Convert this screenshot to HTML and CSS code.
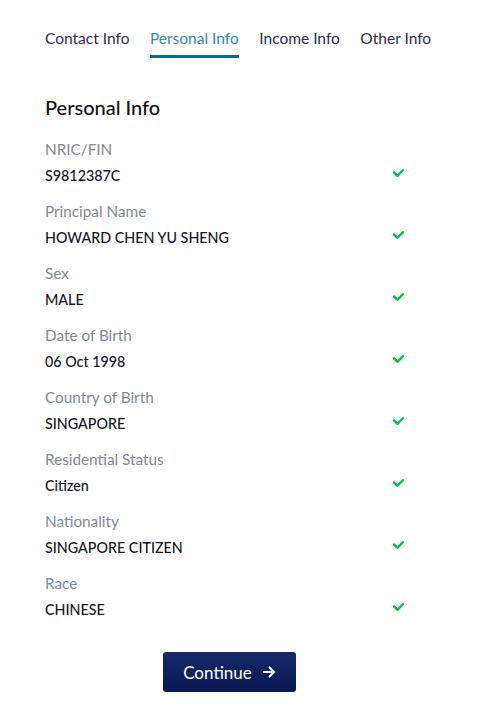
FILE: index.html
```html
<!DOCTYPE html>
<html>
<head>
<meta charset="utf-8">
<link rel="stylesheet" href="styles.css">
</head>
<body>
<div class="page">
  <nav class="tabs">
    <span class="tab">Contact Info</span>
    <span class="tab active">Personal Info</span>
    <span class="tab">Income Info</span>
    <span class="tab">Other Info</span>
  </nav>
  <h2 class="title">Personal Info</h2>
  <div class="fields">
    <div class="field"><div class="text"><div class="label">NRIC/FIN</div><div class="value">S9812387C</div></div><svg class="check" viewBox="0 0 10 7"><path d="M1 3.2 L4 6 L9 1"/></svg></div>
    <div class="field"><div class="text"><div class="label">Principal Name</div><div class="value">HOWARD CHEN YU SHENG</div></div><svg class="check" viewBox="0 0 10 7"><path d="M1 3.2 L4 6 L9 1"/></svg></div>
    <div class="field"><div class="text"><div class="label">Sex</div><div class="value">MALE</div></div><svg class="check" viewBox="0 0 10 7"><path d="M1 3.2 L4 6 L9 1"/></svg></div>
    <div class="field"><div class="text"><div class="label">Date of Birth</div><div class="value">06 Oct 1998</div></div><svg class="check" viewBox="0 0 10 7"><path d="M1 3.2 L4 6 L9 1"/></svg></div>
    <div class="field"><div class="text"><div class="label">Country of Birth</div><div class="value">SINGAPORE</div></div><svg class="check" viewBox="0 0 10 7"><path d="M1 3.2 L4 6 L9 1"/></svg></div>
    <div class="field"><div class="text"><div class="label">Residential Status</div><div class="value">Citizen</div></div><svg class="check" viewBox="0 0 10 7"><path d="M1 3.2 L4 6 L9 1"/></svg></div>
    <div class="field"><div class="text"><div class="label">Nationality</div><div class="value">SINGAPORE CITIZEN</div></div><svg class="check" viewBox="0 0 10 7"><path d="M1 3.2 L4 6 L9 1"/></svg></div>
    <div class="field"><div class="text"><div class="label">Race</div><div class="value">CHINESE</div></div><svg class="check" viewBox="0 0 10 7"><path d="M1 3.2 L4 6 L9 1"/></svg></div>
  </div>
  <div class="actions">
    <button class="btn">Continue <svg class="arrow" viewBox="0 0 14 12"><path d="M1 6 H12 M7 1 L12 6 L7 11"/></svg></button>
  </div>
</div>
</body>
</html>
```
FILE: styles.css
```css
html, body { margin: 0; padding: 0; background: #fff; }
body { font-family: "Lato", "Noto Sans", sans-serif; color: #1c1c28; }
.page { padding: 28px 45px 0 45px; width: 398px; }
.tabs { display: flex; gap: 20.5px; font-size: 15.5px; color: #2e2e3c; }
.tab { padding-bottom: 7px; border-bottom: 3px solid transparent; line-height: 20px; }
.tab.active { color: #3189bb; border-bottom-color: #0a6899; }
.title { font-size: 20px; font-weight: 500; margin: 34px 0 0 0; line-height: 30px; color: #111; }
.fields { margin-top: 9px; display: flex; flex-direction: column; }
.field { display: flex; justify-content: space-between; align-items: center; height: 62px; }
.label { font-size: 15.3px; color: #7c8a98; line-height: 22px; }
.value { font-size: 14.3px; font-weight: 500; line-height: 22px; margin-top: 5px; color: #15151f; }
.check { width: 11px; height: 8px; margin-right: 39px; margin-top: 22px; fill: none; stroke: #00c04a; stroke-width: 2.2; stroke-linecap: square; }
.actions { display: flex; justify-content: center; margin-top: 25px; padding-right: 29px; }
.btn { width: 133px; height: 40px; border: 0; border-radius: 3px; background: linear-gradient(#15296a, #0a1852); color: #fff; font-family: inherit; font-size: 17px; font-weight: 400; display: flex; align-items: center; justify-content: center; gap: 10px; }
.arrow { width: 14px; height: 12px; fill: none; stroke: #fff; stroke-width: 2; }
```
